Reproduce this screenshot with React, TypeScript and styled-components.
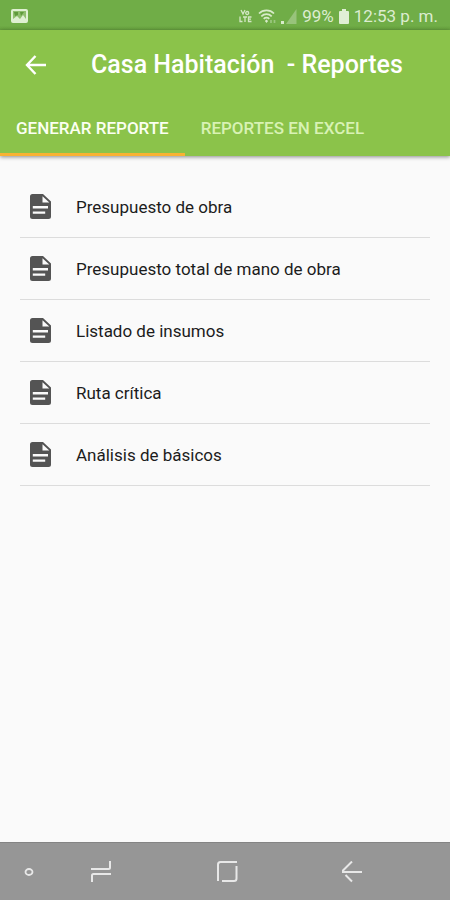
import React, { useState } from "react";
import styled, { createGlobalStyle } from "styled-components";

const GlobalStyle = createGlobalStyle`
  * { box-sizing: border-box; }
  body {
    margin: 0;
    background: #fafafa;
    font-family: Roboto, "Liberation Sans", sans-serif;
  }
`;

const Screen = styled.div`
  display: flex;
  flex-direction: column;
  min-height: 100vh;
`;

const StatusBar = styled.div`
  display: flex;
  align-items: center;
  justify-content: space-between;
  height: 30px;
  padding: 2px 12px 0 11px;
  background: linear-gradient(#70ad47 85%, #68a33f);
  color: #dcecd0;
  font-size: 17px;
  line-height: 24px;
`;

const StatusGroup = styled.div`
  display: flex;
  align-items: center;
  gap: 5px;
`;

const AppBar = styled.header`
  position: relative;
  background: #8bc34a;
  color: #fff;
  box-shadow: 0 1px 4px rgba(0, 0, 0, 0.45);
`;

const Toolbar = styled.div`
  display: flex;
  align-items: center;
  gap: 39px;
  height: 70px;
  padding: 0 20px;
`;

const IconButton = styled.button`
  display: flex;
  align-items: center;
  justify-content: center;
  width: 32px;
  height: 32px;
  padding: 0;
  border: 0;
  background: none;
  color: inherit;
  cursor: pointer;
`;

const Title = styled.h1`
  margin: 0;
  font-size: 25px;
  font-weight: 500;
  line-height: 32px;
  white-space: pre;
`;

const Tabs = styled.div`
  display: flex;
  height: 56px;
`;

const Tab = styled.button<{ $active: boolean }>`
  padding: 2px 16px 0;
  border: 0;
  border-bottom: 3px solid ${(p) => (p.$active ? "#f9b233" : "transparent")};
  background: none;
  color: ${(p) => (p.$active ? "#fbfff2" : "#d8f2b4")};
  font: 500 17px/24px Roboto, "Liberation Sans", sans-serif;
  text-transform: uppercase;
  white-space: nowrap;
  cursor: pointer;
`;

const Reports = styled.ul`
  flex: 1;
  margin: 0;
  padding: 20px;
  list-style: none;
`;

const ReportItem = styled.li`
  border-bottom: 1px solid #dcdcdc;
`;

const ReportButton = styled.button`
  display: flex;
  align-items: center;
  gap: 25px;
  width: 100%;
  height: 61px;
  padding: 0 10px;
  border: 0;
  background: none;
  color: #1c1c1c;
  font: 400 17px/24px Roboto, "Liberation Sans", sans-serif;
  text-align: left;
  cursor: pointer;
`;

const NavBar = styled.nav`
  display: flex;
  align-items: center;
  gap: 40px;
  height: 58px;
  padding: 0 82px 0 13px;
  border-top: 1px solid #848484;
  background: #969696;
  color: #e8e8e8;
`;

const NavKeys = styled.div`
  display: flex;
  flex: 1;
  justify-content: space-between;
`;

const PictureIcon = () => (
  <svg width="17" height="14" viewBox="0 0 17 14" aria-hidden="true">
    <rect x="1" y="1" width="15" height="12" rx="1" fill="#8fbe6d" stroke="#dff0d2" strokeWidth="2" />
    <path d="M2 12v-2l4-3 3 3 3-4 3 4v2z" fill="#dff0d2" />
    <path d="M3 3h4v3l-3 1zM9 3l4 0-3 4z" fill="#5f9a3b" />
  </svg>
);

const LteIcon = () => (
  <svg width="14" height="14" viewBox="0 0 14 14" fill="none" stroke="#d3e6c5" strokeWidth="1.3" aria-hidden="true">
    <path d="M2 1l2 4 2-4M1 7.500v5h2.500M4 8h4M6 8v5M12.500 8H9.500v4.500h3M9.500 10.200h2.500" />
    <circle cx="8.200" cy="4" r="1.500" />
  </svg>
);

const WifiIcon = () => (
  <svg width="18" height="15" viewBox="0 0 18 15" fill="none" stroke="#d8ebca" strokeWidth="1.700" aria-hidden="true">
    <path d="M1 4.500C5 .2 12 .2 16 4.500M3.300 7.300c3-3 7.400-3 10.400 0M5.700 9.800c1.600-1.600 4-1.600 5.600 0" />
    <path d="M8.500 10.500l1.600 1.600-1.600 1.900-1.600-1.900z" fill="#d8ebca" stroke="none" />
    <path d="M13 11v3M16.500 11v3" stroke="#9cc780" />
  </svg>
);

const SignalIcon = () => (
  <svg width="16" height="15" viewBox="0 0 16 15" aria-hidden="true">
    <path d="M15.500 0v15H5z" fill="#98c37b" />
    <path d="M0 12h3v3H0z" fill="#d8ebca" />
  </svg>
);

const BatteryIcon = () => (
  <svg width="10" height="15" viewBox="0 0 10 15" aria-hidden="true">
    <path d="M3 0h4v2h2a1 1 0 0 1 1 1v11a1 1 0 0 1-1 1H1a1 1 0 0 1-1-1V3a1 1 0 0 1 1-1h2z" fill="#e0efd5" />
  </svg>
);

const ArrowIcon = () => (
  <svg width="22" height="20" viewBox="0 0 22 20" fill="none" stroke="currentColor" strokeWidth="2.400" aria-hidden="true">
    <path d="M10.500 1L2 10l8.500 9M2 10h19" />
  </svg>
);

const DocumentIcon = () => (
  <svg width="21" height="25" viewBox="0 0 21 25" aria-hidden="true">
    <path d="M2.500 0H13l8 7.500v15a2.500 2.500 0 0 1-2.500 2.500h-16A2.500 2.500 0 0 1 0 22.500v-20A2.500 2.500 0 0 1 2.500 0z" fill="#545454" />
    <path d="M12.500 2.200v6.300h6.800zM2.800 12H18v2.400H2.800zM2.800 17.400h12.400v2.400H2.800z" fill="#fafafa" />
  </svg>
);

const DotIcon = () => (
  <svg width="10" height="10" viewBox="0 0 10 10" fill="none" stroke="currentColor" strokeWidth="1.800" aria-hidden="true">
    <ellipse cx="5" cy="5" rx="3.500" ry="3" />
  </svg>
);

const RecentsIcon = () => (
  <svg width="22" height="22" viewBox="0 0 22 22" fill="none" stroke="currentColor" strokeWidth="2" aria-hidden="true">
    <path d="M1 8h17.500q1.500 0 1.500-1.500V0M21 13H3.500q-1.500 0-1.500 1.500V21" />
  </svg>
);

const HomeIcon = () => (
  <svg width="22" height="22" viewBox="0 0 22 22" fill="none" stroke="currentColor" strokeWidth="2" aria-hidden="true">
    <path d="M2 20V3.500q0-2.500 2.500-2.500H21M20.500 5V17.500q0 2.500-2.500 2.500H6" />
  </svg>
);

const NavBackIcon = () => (
  <svg width="22" height="22" viewBox="0 0 22 22" fill="none" stroke="currentColor" strokeWidth="2" aria-hidden="true">
    <path d="M11 .5L2 9.500V11h19M4.500 14l6.500 6.500" />
  </svg>
);

const tabs = ["Generar reporte", "Reportes en Excel"];

const reports = [
  "Presupuesto de obra",
  "Presupuesto total de mano de obra",
  "Listado de insumos",
  "Ruta crítica",
  "Análisis de básicos",
];

export default function App() {
  const [active, setActive] = useState(0);

  return (
    <Screen>
      <GlobalStyle />
      <StatusBar>
        <PictureIcon />
        <StatusGroup>
          <LteIcon />
          <WifiIcon />
          <SignalIcon />
          <span>99%</span>
          <BatteryIcon />
          <span>12:53 p. m.</span>
        </StatusGroup>
      </StatusBar>
      <AppBar>
        <Toolbar>
          <IconButton aria-label="Regresar">
            <ArrowIcon />
          </IconButton>
          <Title>{"Casa Habitación  - Reportes"}</Title>
        </Toolbar>
        <Tabs role="tablist">
          {tabs.map((label, i) => (
            <Tab key={label} role="tab" aria-selected={i === active} $active={i === active} onClick={() => setActive(i)}>
              {label}
            </Tab>
          ))}
        </Tabs>
      </AppBar>
      <Reports>
        {reports.map((name) => (
          <ReportItem key={name}>
            <ReportButton>
              <DocumentIcon />
              {name}
            </ReportButton>
          </ReportItem>
        ))}
      </Reports>
      <NavBar aria-label="Sistema">
        <IconButton aria-label="Mostrar barra">
          <DotIcon />
        </IconButton>
        <NavKeys>
          <IconButton aria-label="Recientes">
            <RecentsIcon />
          </IconButton>
          <IconButton aria-label="Inicio">
            <HomeIcon />
          </IconButton>
          <IconButton aria-label="Atrás">
            <NavBackIcon />
          </IconButton>
        </NavKeys>
      </NavBar>
    </Screen>
  );
}
